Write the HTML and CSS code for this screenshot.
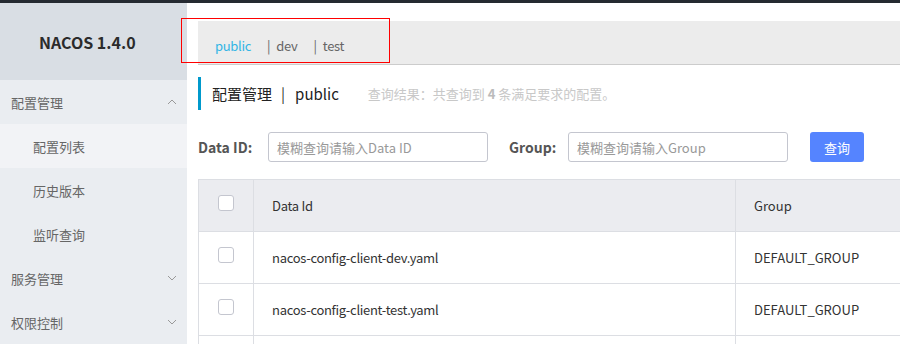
FILE: index.html
```html
<!DOCTYPE html>
<html>
<head>
  <title>Nacos</title>
  <meta name="viewport" content="width=device-width, initial-scale=1.0">
  <link rel="stylesheet" href="styles.css">
</head>
<body>
  <div class="top-bar"></div>
  <div class="layout">
    <!-- left navigation -->
    <div class="sidebar">
      <div class="logo">NACOS 1.4.0</div>
      <div class="menu">
        <div class="menu-group">
          <span>配置管理</span>
          <svg class="chevron" width="10" height="6" viewBox="0 0 10 6"><polyline points="1,5 5,1 9,5" /></svg>
        </div>
        <div class="menu-item active">配置列表</div>
        <div class="menu-item">历史版本</div>
        <div class="menu-item">监听查询</div>
        <div class="menu-group">
          <span>服务管理</span>
          <svg class="chevron" width="10" height="6" viewBox="0 0 10 6"><polyline points="1,1 5,5 9,1" /></svg>
        </div>
        <div class="menu-group">
          <span>权限控制</span>
          <svg class="chevron" width="10" height="6" viewBox="0 0 10 6"><polyline points="1,1 5,5 9,1" /></svg>
        </div>
      </div>
    </div>

    <div class="main">
      <div class="highlight-box"></div>
      <div class="namespace-bar">
        <span class="ns active">public</span>
        <span class="ns"><span class="sep">|</span>dev</span>
        <span class="ns"><span class="sep">|</span>test</span>
      </div>

      <div class="page-title">
        <span class="title-text">配置管理<span class="title-sep">|</span>public</span>
        <span class="result-text">查询结果：共查询到 <b>4</b> 条满足要求的配置。</span>
      </div>

      <div class="search-row">
        <label class="id-label">Data ID:</label>
        <input type="text" placeholder="模糊查询请输入Data ID">
        <label class="group-label">Group:</label>
        <input type="text" placeholder="模糊查询请输入Group">
        <button class="search-btn">查询</button>
      </div>

      <div class="table-wrap">
        <table class="config-table">
          <colgroup>
            <col class="col-check">
            <col class="col-id">
            <col class="col-group">
          </colgroup>
          <thead>
            <tr>
              <th class="cell-check"><span class="checkbox"></span></th>
              <th class="cell-id">Data Id</th>
              <th>Group</th>
            </tr>
          </thead>
          <tbody>
            <tr>
              <td class="cell-check"><span class="checkbox"></span></td>
              <td class="cell-id">nacos-config-client-dev.yaml</td>
              <td>DEFAULT_GROUP</td>
            </tr>
            <tr>
              <td class="cell-check"><span class="checkbox"></span></td>
              <td class="cell-id">nacos-config-client-test.yaml</td>
              <td>DEFAULT_GROUP</td>
            </tr>
            <tr>
              <td class="cell-check"></td>
              <td class="cell-id"></td>
              <td></td>
            </tr>
          </tbody>
        </table>
      </div>
    </div>
  </div>
</body>
</html>
```

FILE: styles.css
```css
body {
  margin: 0;
  height: 344px;
  overflow: hidden;
  font-family: "Noto Sans CJK SC", "Noto Sans", sans-serif;
  color: #333;
  background-color: #fff;
}

.top-bar {
  height: 3px;
  background-color: #252a31;
}

.layout {
  display: flex;
  height: 341px;
}

.sidebar {
  width: 187px;
  flex-shrink: 0;
  background-color: #eaedf1;
}

.logo {
  height: 77px;
  background-color: #d9dee4;
  display: flex;
  align-items: center;
  padding-left: 39px;
  font-size: 16px;
  font-weight: bold;
  color: #2b2b2b;
}

.menu-group,
.menu-item {
  height: 44px;
  display: flex;
  align-items: center;
  font-size: 13px;
  color: #666;
}

.menu-group {
  justify-content: space-between;
  padding-left: 11px;
  padding-right: 10px;
}

.menu-item {
  padding-left: 33px;
}

.menu-item.active {
  background-color: #f2f3f6;
}

.chevron polyline {
  fill: none;
  stroke: #999;
  stroke-width: 1;
}

.main {
  flex: 1;
  min-width: 0;
  position: relative;
  padding-left: 11px;
  padding-top: 18px;
  display: flex;
  flex-direction: column;
}

/* annotation box drawn over the namespace tabs */
.highlight-box {
  position: absolute;
  left: -6px;
  top: 15px;
  width: 207px;
  height: 43px;
  border: 1px solid #f00;
}

.namespace-bar {
  flex-shrink: 0;
  height: 44px;
  background-color: #ececec;
  border-bottom: 1px solid #ccc;
  padding-left: 17px;
  box-sizing: border-box;
  display: flex;
  align-items: flex-end;
  padding-bottom: 9px;
  font-size: 13px;
  letter-spacing: -0.3px;
}

.ns {
  color: #666;
  margin-right: 16px;
}

.ns .sep {
  margin-right: 6px;
}

.ns.active {
  color: #33b5e5;
}

.page-title {
  flex-shrink: 0;
  margin-top: 12px;
  height: 33px;
  border-left: 3px solid #0099cc;
  padding-left: 11px;
  display: flex;
  align-items: center;
}

.title-text {
  font-size: 15px;
  color: #222;
}

.title-sep {
  margin: 0 10px 0 9px;
  color: #333;
}

.result-text {
  margin-left: 29px;
  font-size: 13px;
  color: #c8c8c8;
}

.result-text b {
  color: #bbb;
}

.search-row {
  flex-shrink: 0;
  margin-top: 22px;
  display: flex;
  align-items: center;
  height: 30px;
}

.search-row label {
  font-size: 14px;
  font-weight: bold;
  color: #555;
}

.search-row .id-label {
  width: 70px;
}

.search-row .group-label {
  margin-left: 21px;
  width: 59px;
}

.search-row input {
  width: 220px;
  height: 30px;
  box-sizing: border-box;
  border: 1px solid #c4c6cf;
  border-radius: 3px;
  padding: 0 8px;
  font-family: inherit;
  font-size: 13px;
  color: #333;
  outline: none;
}

.search-row input::placeholder {
  color: #999;
}

.search-btn {
  margin-left: 22px;
  width: 54px;
  height: 30px;
  border: none;
  border-radius: 3px;
  background-color: #5584ff;
  color: #fff;
  font-family: inherit;
  font-size: 13px;
}

.table-wrap {
  flex: 1;
  min-height: 0;
  margin-top: 17px;
  overflow: hidden;
}

.config-table {
  width: 900px;
  border-collapse: collapse;
  table-layout: fixed;
  font-size: 13px;
}

.config-table .col-check {
  width: 55px;
}

.config-table .col-id {
  width: 482px;
}

.config-table th,
.config-table td {
  height: 51px;
  border: 1px solid #dcdee3;
  text-align: left;
  padding: 0 0 0 18px;
  font-weight: normal;
  color: #333;
}

.config-table th {
  background-color: #ebecf0;
}

.config-table .cell-check {
  padding: 0;
  text-align: center;
}

.config-table .cell-id {
  letter-spacing: -0.3px;
}

.checkbox {
  display: inline-block;
  width: 16px;
  height: 16px;
  box-sizing: border-box;
  border: 1px solid #c4c6cf;
  border-radius: 3px;
  background-color: #fff;
  vertical-align: middle;
  transform: translateY(-4px);
}
```
